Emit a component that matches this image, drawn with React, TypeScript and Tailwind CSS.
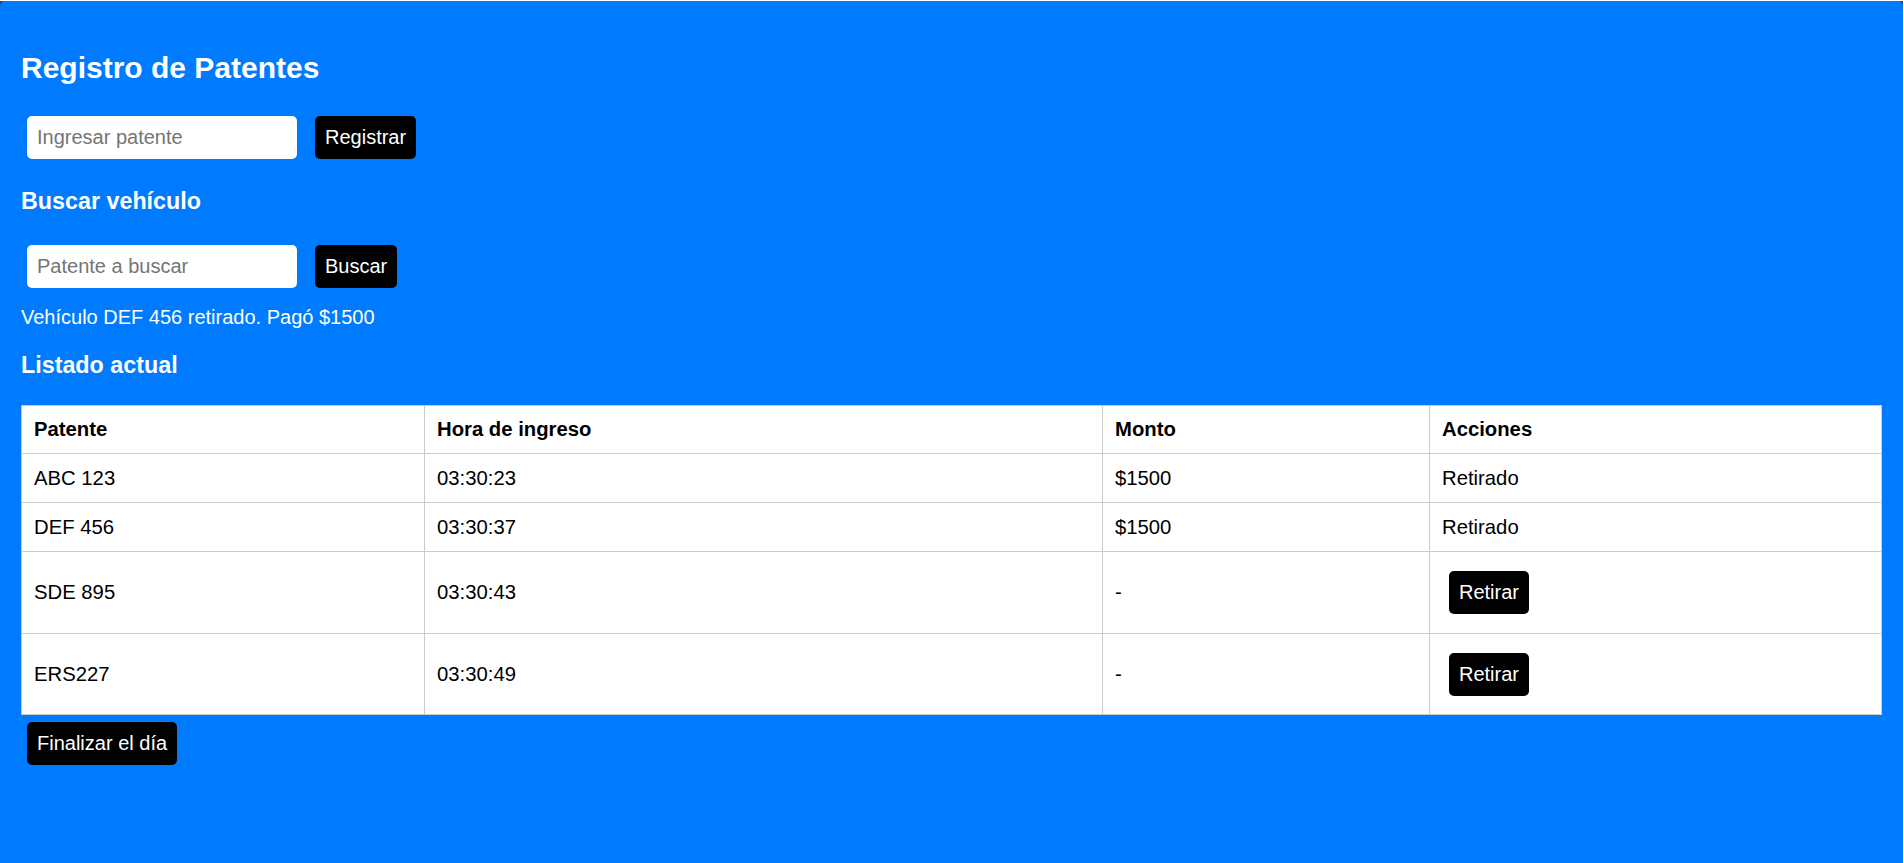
import React from "react";

const rows = [
  { p: "ABC 123", h: "03:30:23", m: "$1500", done: true },
  { p: "DEF 456", h: "03:30:37", m: "$1500", done: true },
  { p: "SDE 895", h: "03:30:43", m: "-", done: false },
  { p: "ERS227", h: "03:30:49", m: "-", done: false },
];

export default function App() {
  return (
    <div
      className="min-h-screen bg-[#3a3f46]"
      style={{ fontFamily: '"Liberation Sans", Arial, sans-serif' }}
    >
      <div className="mt-px min-h-[862px] rounded-t-[5px] bg-[#007bff] px-[21px] pt-[50px] pb-10 text-white">
        <h2 className="text-[30px] font-bold leading-[34px]">Registro de Patentes</h2>

        <div className="mt-[31px] flex items-center gap-[18px] pl-[6px]">
          <input
            placeholder="Ingresar patente"
            className="h-[43px] w-[270px] rounded-[5px] bg-white px-[10px] text-[20px] text-black outline-none placeholder:text-[#757575]"
          />
          <button className="h-[43px] rounded-[5px] bg-black px-[10px] text-[20px] leading-[23px] text-white">
            Registrar
          </button>
        </div>

        <h3 className="mt-[29px] text-[23.3px] font-bold leading-[27px]">Buscar vehículo</h3>

        <div className="mt-[30px] flex items-center gap-[18px] pl-[6px]">
          <input
            placeholder="Patente a buscar"
            className="h-[43px] w-[270px] rounded-[5px] bg-white px-[10px] text-[20px] text-black outline-none placeholder:text-[#757575]"
          />
          <button className="h-[43px] rounded-[5px] bg-black px-[10px] text-[20px] leading-[23px] text-white">
            Buscar
          </button>
        </div>

        <p className="mt-[18px] text-[20px] leading-[23px]">Vehículo DEF 456 retirado. Pagó $1500</p>

        <h3 className="mt-[23px] text-[23.3px] font-bold leading-[27px]">Listado actual</h3>

        <table className="mt-[26px] w-[1860px] table-fixed border-collapse bg-white text-left text-[20.3px] leading-[23px] text-black">
          <colgroup>
            <col className="w-[403px]" />
            <col className="w-[678px]" />
            <col className="w-[327px]" />
            <col className="w-[452px]" />
          </colgroup>
          <thead>
            <tr className="h-[48px]">
              <th className="border border-[#cccccc] px-[12px] align-middle font-bold">Patente</th>
              <th className="border border-[#cccccc] px-[12px] align-middle font-bold">Hora de ingreso</th>
              <th className="border border-[#cccccc] px-[12px] align-middle font-bold">Monto</th>
              <th className="border border-[#cccccc] px-[12px] align-middle font-bold">Acciones</th>
            </tr>
          </thead>
          <tbody>
            {rows.map((r, i) => (
              <tr key={r.p} className={r.done ? "h-[49px]" : i === 2 ? "h-[82px]" : "h-[81px]"}>
                <td className="border border-[#cccccc] px-[12px] align-middle">{r.p}</td>
                <td className="border border-[#cccccc] px-[12px] align-middle">{r.h}</td>
                <td className="border border-[#cccccc] px-[12px] align-middle">{r.m}</td>
                <td className="border border-[#cccccc] px-[12px] align-middle">
                  {r.done ? (
                    "Retirado"
                  ) : (
                    <button className="ml-[7px] h-[43px] rounded-[5px] bg-black px-[10px] text-[20px] leading-[23px] text-white">
                      Retirar
                    </button>
                  )}
                </td>
              </tr>
            ))}
          </tbody>
        </table>

        <div className="mt-[7px] pl-[6px]">
          <button className="h-[43px] rounded-[5px] bg-black px-[10px] text-[20px] leading-[23px] text-white">
            Finalizar el día
          </button>
        </div>
      </div>
    </div>
  );
}
